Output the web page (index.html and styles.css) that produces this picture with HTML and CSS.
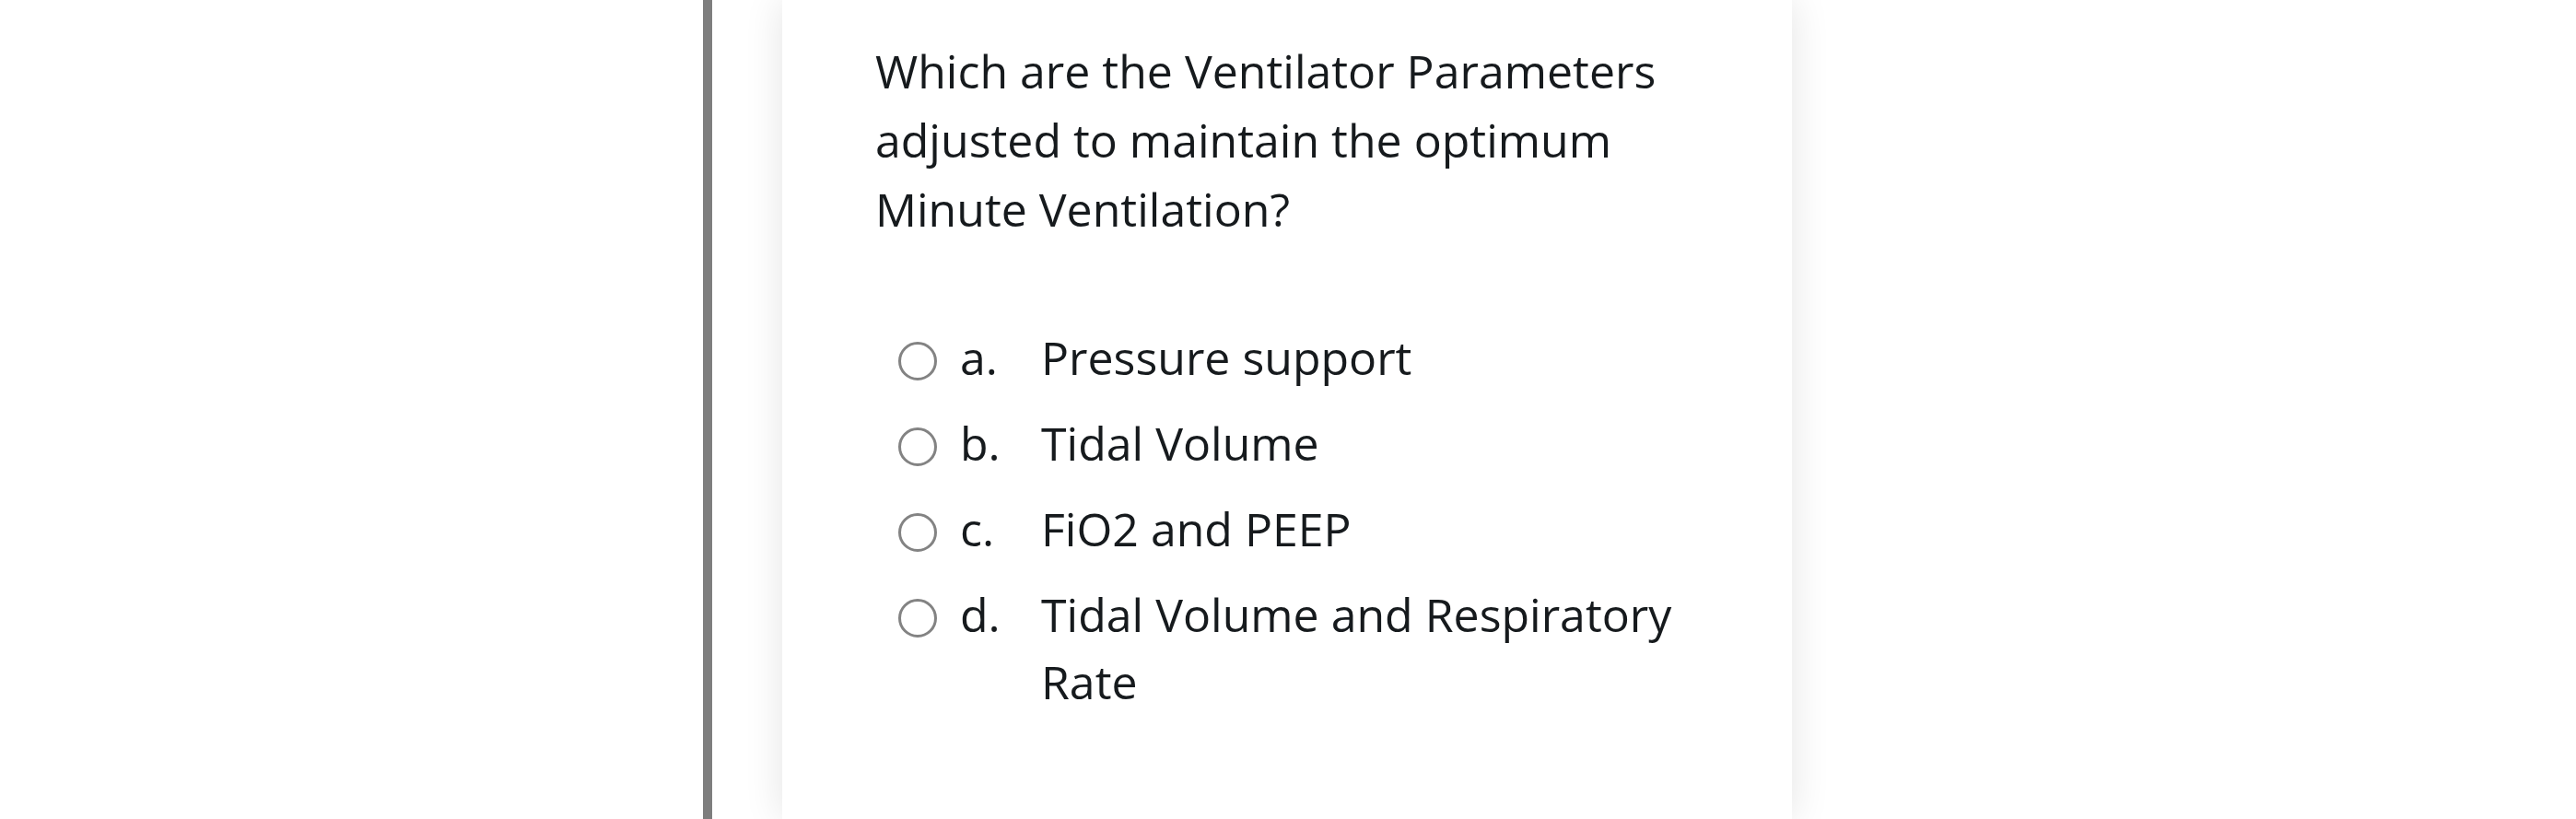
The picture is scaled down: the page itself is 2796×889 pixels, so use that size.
FILE: index.html
```html
<!DOCTYPE html>
<html lang="en">
<head>
<meta charset="utf-8">
<title>Question</title>
<link rel="stylesheet" href="styles.css">
</head>
<body>
<div class="page">
  <div class="rule"></div>
  <div class="card">
    <div class="question">Which are the Ventilator Parameters adjusted to maintain the optimum Minute Ventilation?</div>
    <div class="answers">
      <div class="option"><span class="radio"></span><span class="letter">a.</span><span class="text">Pressure support</span></div>
      <div class="option"><span class="radio"></span><span class="letter">b.</span><span class="text">Tidal Volume</span></div>
      <div class="option"><span class="radio"></span><span class="letter">c.</span><span class="text">FiO2 and PEEP</span></div>
      <div class="option"><span class="radio"></span><span class="letter">d.</span><span class="text">Tidal Volume and Respiratory Rate</span></div>
    </div>
  </div>
</div>
</body>
</html>
```
FILE: styles.css
```css
html, body {
  margin: 0;
  padding: 0;
  background: #ffffff;
}
body {
  width: 2796px;
  height: 889px;
  overflow: hidden;
  font-family: "Open Sans", "Noto Sans", sans-serif;
  color: #161a1d;
}
.page {
  display: flex;
  height: 889px;
}
.rule {
  margin-left: 763px;
  width: 10px;
  background: #7e7e7e;
  flex: none;
}
.card {
  margin-left: 76px;
  width: 1096px;
  box-sizing: border-box;
  padding: 40px 101px 0 101px;
  background: #ffffff;
  box-shadow: 0 0 40px rgba(0, 0, 0, 0.11);
  flex: none;
}
.question {
  font-size: 50px;
  line-height: 75px;
}
.answers {
  margin-top: 87px;
  display: flex;
  flex-direction: column;
  gap: 20px;
}
.option {
  display: flex;
  align-items: flex-start;
  font-size: 50px;
  line-height: 73px;
}
.radio {
  flex: none;
  width: 42px;
  height: 42px;
  box-sizing: border-box;
  border: 3.5px solid #838383;
  border-radius: 50%;
  margin: 19px 25px 0 25px;
}
.letter {
  flex: none;
  width: 88px;
}
.text {
  flex: 1;
}
```
